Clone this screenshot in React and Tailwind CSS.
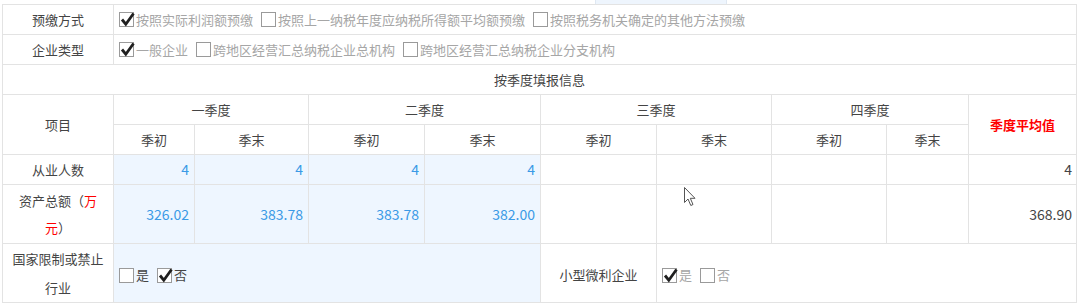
import React from 'react';

const font = { fontFamily: '"Microsoft YaHei", "Noto Sans CJK SC", "Noto Sans", sans-serif' };

const Box = ({ checked }) => (
  <span className="relative inline-block w-[15px] h-[15px] border border-[#9a9a9a] bg-white align-middle shrink-0">
    {checked && (
      <svg className="absolute -left-[1px] -top-[2px]" width="17" height="17" viewBox="0 0 17 17">
        <path d="M3 8.5 L6.8 13.2 L14.5 2.5" fill="none" stroke="#1f1f1f" strokeWidth="2.8" strokeLinejoin="miter" />
      </svg>
    )}
  </span>
);

const Option = ({ checked, label, dim = true }) => (
  <span className="inline-flex items-center mr-[8px]">
    <Box checked={checked} />
    <span className={`ml-[2px] ${dim ? 'text-[#a6a6a6]' : 'text-[#444]'}`}>{label}</span>
  </span>
);

const cell = 'border border-[#e3e3e3] align-middle';
const blue = 'bg-[#eef6ff]';
const num = 'text-right pr-[5px] text-[#3b9ae6] text-[14px]';

export default function App() {
  const quarters = ['一季度', '二季度', '三季度', '四季度'];

  return (
    <div className="relative w-[1080px] h-[304px] bg-white overflow-hidden text-[13px] text-[#444]" style={font}>
      {/* strip of the element above */}
      <div className="h-[4px] flex">
        <div className="ml-[595px] w-[132px] bg-[#eef5fd] border-x border-[#dfe8f2]" />
      </div>

      <table className="ml-[2px] w-[1074px] table-fixed border-collapse">
        <colgroup>
          <col className="w-[111px]" />
          <col className="w-[81px]" />
          <col className="w-[114px]" />
          <col className="w-[116px]" />
          <col className="w-[116px]" />
          <col className="w-[116px]" />
          <col className="w-[115px]" />
          <col className="w-[115px]" />
          <col className="w-[82px]" />
          <col className="w-[108px]" />
        </colgroup>
        <tbody>
          <tr className="h-[30px]">
            <td className={`${cell} text-center`}>预缴方式</td>
            <td className={`${cell} pl-[5px]`} colSpan={9}>
              <div className="flex items-center">
                <Option checked label="按照实际利润额预缴" />
                <Option label="按照上一纳税年度应纳税所得额平均额预缴" />
                <Option label="按照税务机关确定的其他方法预缴" />
              </div>
            </td>
          </tr>
          <tr className="h-[30px]">
            <td className={`${cell} text-center`}>企业类型</td>
            <td className={`${cell} pl-[5px]`} colSpan={9}>
              <div className="flex items-center">
                <Option checked label="一般企业" />
                <Option label="跨地区经营汇总纳税企业总机构" />
                <Option label="跨地区经营汇总纳税企业分支机构" />
              </div>
            </td>
          </tr>
          <tr className="h-[30px]">
            <td className={`${cell} text-center`} colSpan={10}>按季度填报信息</td>
          </tr>
          <tr className="h-[30px]">
            <td className={`${cell} text-center`} rowSpan={2}>项目</td>
            {quarters.map((q) => (
              <td key={q} className={`${cell} text-center`} colSpan={2}>{q}</td>
            ))}
            <td className={`${cell} text-center text-[#ff0000] font-bold`} rowSpan={2}>季度平均值</td>
          </tr>
          <tr className="h-[30px]">
            {quarters.map((q) => (
              <React.Fragment key={q}>
                <td className={`${cell} text-center`}>季初</td>
                <td className={`${cell} text-center`}>季末</td>
              </React.Fragment>
            ))}
          </tr>
          <tr className="h-[30px]">
            <td className={`${cell} text-center`}>从业人数</td>
            <td className={`${cell} ${blue} ${num}`}>4</td>
            <td className={`${cell} ${blue} ${num}`}>4</td>
            <td className={`${cell} ${blue} ${num}`}>4</td>
            <td className={`${cell} ${blue} ${num}`}>4</td>
            <td className={cell}></td>
            <td className={cell}></td>
            <td className={cell}></td>
            <td className={cell}></td>
            <td className={`${cell} text-right pr-[4px] text-[14px]`}>4</td>
          </tr>
          <tr className="h-[59px]">
            <td className={`${cell} text-center px-[6px] leading-[27px]`}>
              <div>资产总额（<span className="text-[#ff0000]">万</span></div>
              <div><span className="text-[#ff0000]">元</span>）</div>
            </td>
            <td className={`${cell} ${blue} ${num}`}>326.02</td>
            <td className={`${cell} ${blue} ${num}`}>383.78</td>
            <td className={`${cell} ${blue} ${num}`}>383.78</td>
            <td className={`${cell} ${blue} ${num}`}>382.00</td>
            <td className={cell}></td>
            <td className={cell}></td>
            <td className={cell}></td>
            <td className={cell}></td>
            <td className={`${cell} text-right pr-[4px] text-[14px]`}>368.90</td>
          </tr>
          <tr className="h-[59px]">
            <td className={`${cell} text-center px-[6px] leading-[29px]`}>国家限制或禁止行业</td>
            <td className={`${cell} ${blue} pl-[5px] pt-[4px]`} colSpan={4}>
              <div className="flex items-center">
                <Option label="是" dim={false} />
                <Option checked label="否" dim={false} />
              </div>
            </td>
            <td className={`${cell} text-center pt-[4px]`}>小型微利企业</td>
            <td className={`${cell} pl-[5px] pt-[4px]`} colSpan={4}>
              <div className="flex items-center">
                <Option checked label="是" />
                <Option label="否" />
              </div>
            </td>
          </tr>
        </tbody>
      </table>

      {/* mouse pointer */}
      <svg className="absolute left-[684px] top-[187px]" width="13" height="20" viewBox="0 0 13 20">
        <path d="M0.5 0.5 L0.5 15.5 L4 12 L6.8 18.5 L9 17.5 L6.3 11.3 L11 11.3 Z" fill="#fff" stroke="#555" strokeWidth="1" />
      </svg>
    </div>
  );
}
